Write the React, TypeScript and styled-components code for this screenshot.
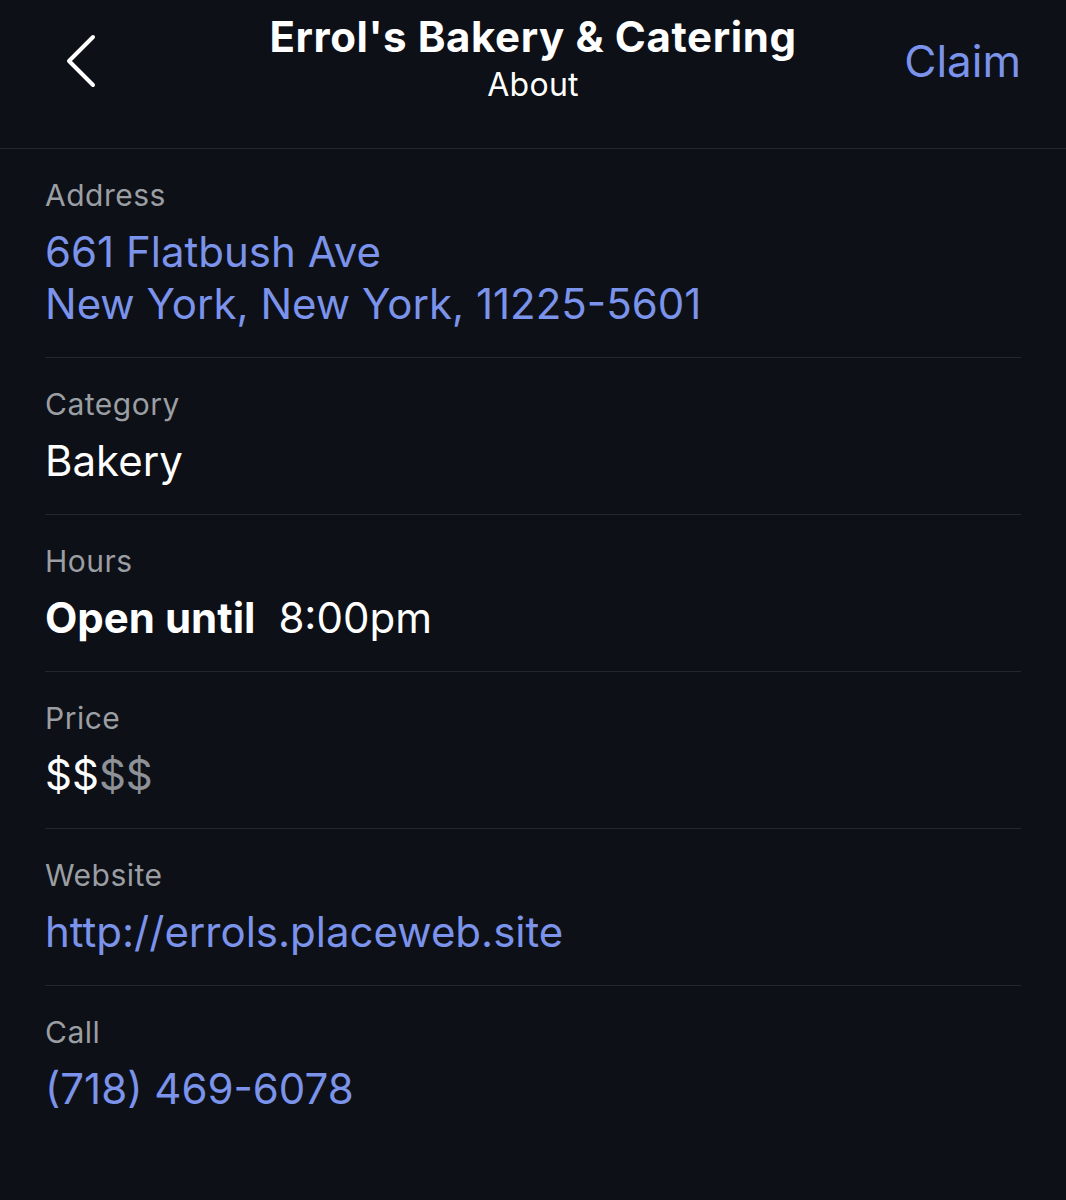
import React from 'react'
import styled, { createGlobalStyle } from 'styled-components'

const GlobalStyle = createGlobalStyle`
  html, body {
    margin: 0;
    padding: 0;
    background: #0d1016;
  }
  body {
    font-family: Inter, "Noto Sans", "Liberation Sans", sans-serif;
    -webkit-font-smoothing: antialiased;
  }
`

const Page = styled.div`
  width: 1066px;
  min-height: 1200px;
  background: #0d1016;
  color: #ffffff;
`

const Header = styled.header`
  height: 149px;
  box-sizing: border-box;
  border-bottom: 1px solid #24272c;
  display: grid;
  grid-template-columns: 200px 1fr 200px;
  align-items: start;
`

const BackButton = styled.button`
  background: none;
  border: 0;
  padding: 0;
  margin: 34px 0 0 64px;
  width: 34px;
  height: 54px;
  color: #ffffff;
  cursor: pointer;
  justify-self: start;
`

const TitleBlock = styled.div`
  display: flex;
  flex-direction: column;
  align-items: center;
  padding-top: 11px;
`

const Title = styled.h1`
  margin: 0;
  font-size: 42px;
  line-height: 52px;
  font-weight: 700;
  letter-spacing: 0.6px;
  white-space: nowrap;
`

const Subtitle = styled.div`
  font-size: 32px;
  line-height: 44px;
  font-weight: 400;
  letter-spacing: 0.3px;
`

const Claim = styled.button`
  background: none;
  border: 0;
  padding: 0;
  margin: 34px 45px 0 0;
  justify-self: end;
  font-family: inherit;
  font-size: 44px;
  line-height: 54px;
  color: #7b93ea;
  cursor: pointer;
`

const List = styled.main`
  padding: 0 45px;
`

const Row = styled.section`
  padding: 29px 0 27px;
  border-bottom: 1px solid #24272c;
  &:last-child {
    border-bottom: 0;
  }
`

const Label = styled.div`
  font-size: 30px;
  line-height: 34px;
  letter-spacing: 0.5px;
  color: #9b9ea3;
  margin-bottom: 14px;
`

const Value = styled.div<{ $link?: boolean }>`
  font-size: 42px;
  line-height: 52px;
  color: ${p => (p.$link ? '#7b93ea' : '#ffffff')};
`

const Strong = styled.span`
  font-weight: 700;
  margin-right: 23px;
`

const Dim = styled.span`
  color: #8e9196;
`

export default function App(): JSX.Element {
  return (
    <Page>
      <GlobalStyle />
      <Header>
        <BackButton aria-label="Back">
          <svg width="34" height="54" viewBox="0 0 34 54" fill="none">
            <path
              d="M29 3 L5 27 L29 51"
              stroke="currentColor"
              strokeWidth="4"
              strokeLinecap="round"
              strokeLinejoin="round"
            />
          </svg>
        </BackButton>
        <TitleBlock>
          <Title>Errol's Bakery &amp; Catering</Title>
          <Subtitle>About</Subtitle>
        </TitleBlock>
        <Claim>Claim</Claim>
      </Header>
      <List>
        <Row>
          <Label>Address</Label>
          <Value $link>
            661 Flatbush Ave
            <br />
            New York, New York, 11225-5601
          </Value>
        </Row>
        <Row>
          <Label>Category</Label>
          <Value>Bakery</Value>
        </Row>
        <Row>
          <Label>Hours</Label>
          <Value>
            <Strong>Open until</Strong>8:00pm
          </Value>
        </Row>
        <Row>
          <Label>Price</Label>
          <Value>
            $$<Dim>$$</Dim>
          </Value>
        </Row>
        <Row>
          <Label>Website</Label>
          <Value $link>http://errols.placeweb.site</Value>
        </Row>
        <Row>
          <Label>Call</Label>
          <Value $link>(718) 469-6078</Value>
        </Row>
      </List>
    </Page>
  )
}
